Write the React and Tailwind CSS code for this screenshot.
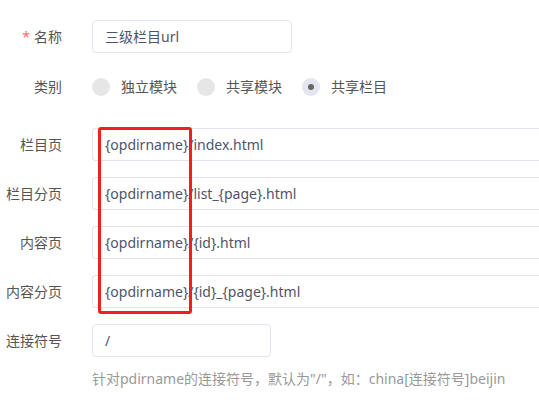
import React from 'react'

const font = { fontFamily: '"Noto Sans", "Noto Sans CJK SC", sans-serif' }

const Row = ({label, required, children, className = ''}) => (
  <div className={`flex items-center ${className}`}>
    <div className="w-[62px] shrink-0 text-right text-[14px] text-[#555] leading-[20px]">
      {required && <span className="text-[#f56c6c] mr-[4px]">*</span>}
      {label}
    </div>
    <div className="ml-[30px] flex-1 min-w-0">{children}</div>
  </div>
)

const Input = ({value, className = ''}) => (
  <div className={`h-[33px] flex items-center px-[12px] border border-[#e3e3ee] rounded-[4px] bg-white text-[14px] text-[#50546a] whitespace-nowrap overflow-hidden ${className}`}>
    {value}
  </div>
)

const Radio = ({label, checked}) => (
  <div className="flex items-center">
    <span className={`w-[18px] h-[18px] rounded-full flex items-center justify-center ${checked ? 'bg-[#e4e6ef]' : 'bg-[#e6e6e6]'}`}>
      {checked && <span className="w-[6px] h-[6px] rounded-full bg-[#666]" />}
    </span>
    <span className="ml-[11px] text-[14px] text-[#555]">{label}</span>
  </div>
)

const paths = [
  ['栏目页', '{opdirname}/index.html'],
  ['栏目分页', '{opdirname}/list_{page}.html'],
  ['内容页', '{opdirname}/{id}.html'],
  ['内容分页', '{opdirname}/{id}_{page}.html'],
]

export default function App() {
  return (
    <div className="w-[539px] h-[400px] bg-white overflow-hidden relative" style={font}>
      <div className="pt-[20px]">
        <Row label="名称" required>
          <Input value="三级栏目url" className="w-[200px]" />
        </Row>
        <Row label="类别" className="mt-[17px] h-[33px]">
          <div className="flex items-center gap-[20px]">
            <Radio label="独立模块" />
            <Radio label="共享模块" />
            <Radio label="共享栏目" checked />
          </div>
        </Row>
        <div className="mt-[25px] relative">
          {paths.map(([label, value], idx) => (
            <Row key={idx} label={label} className={idx > 0 ? 'mt-[16px]' : ''}>
              <Input value={value} className="rounded-r-none border-r-0 -mr-[4px]" />
            </Row>
          ))}
          <div className="absolute left-[98px] top-[-1px] w-[94px] h-[187px] border-[3px] border-[#f02020] rounded-[3px]" />
        </div>
        <Row label="连接符号" className="mt-[16px]">
          <Input value="/" className="w-[179px]" />
        </Row>
        <div className="ml-[92px] mt-[12px] text-[14px] leading-[20px] text-[#999] whitespace-nowrap">
          针对pdirname的连接符号，默认为"/"，如：china[连接符号]beijin
        </div>
      </div>
    </div>
  )
}
